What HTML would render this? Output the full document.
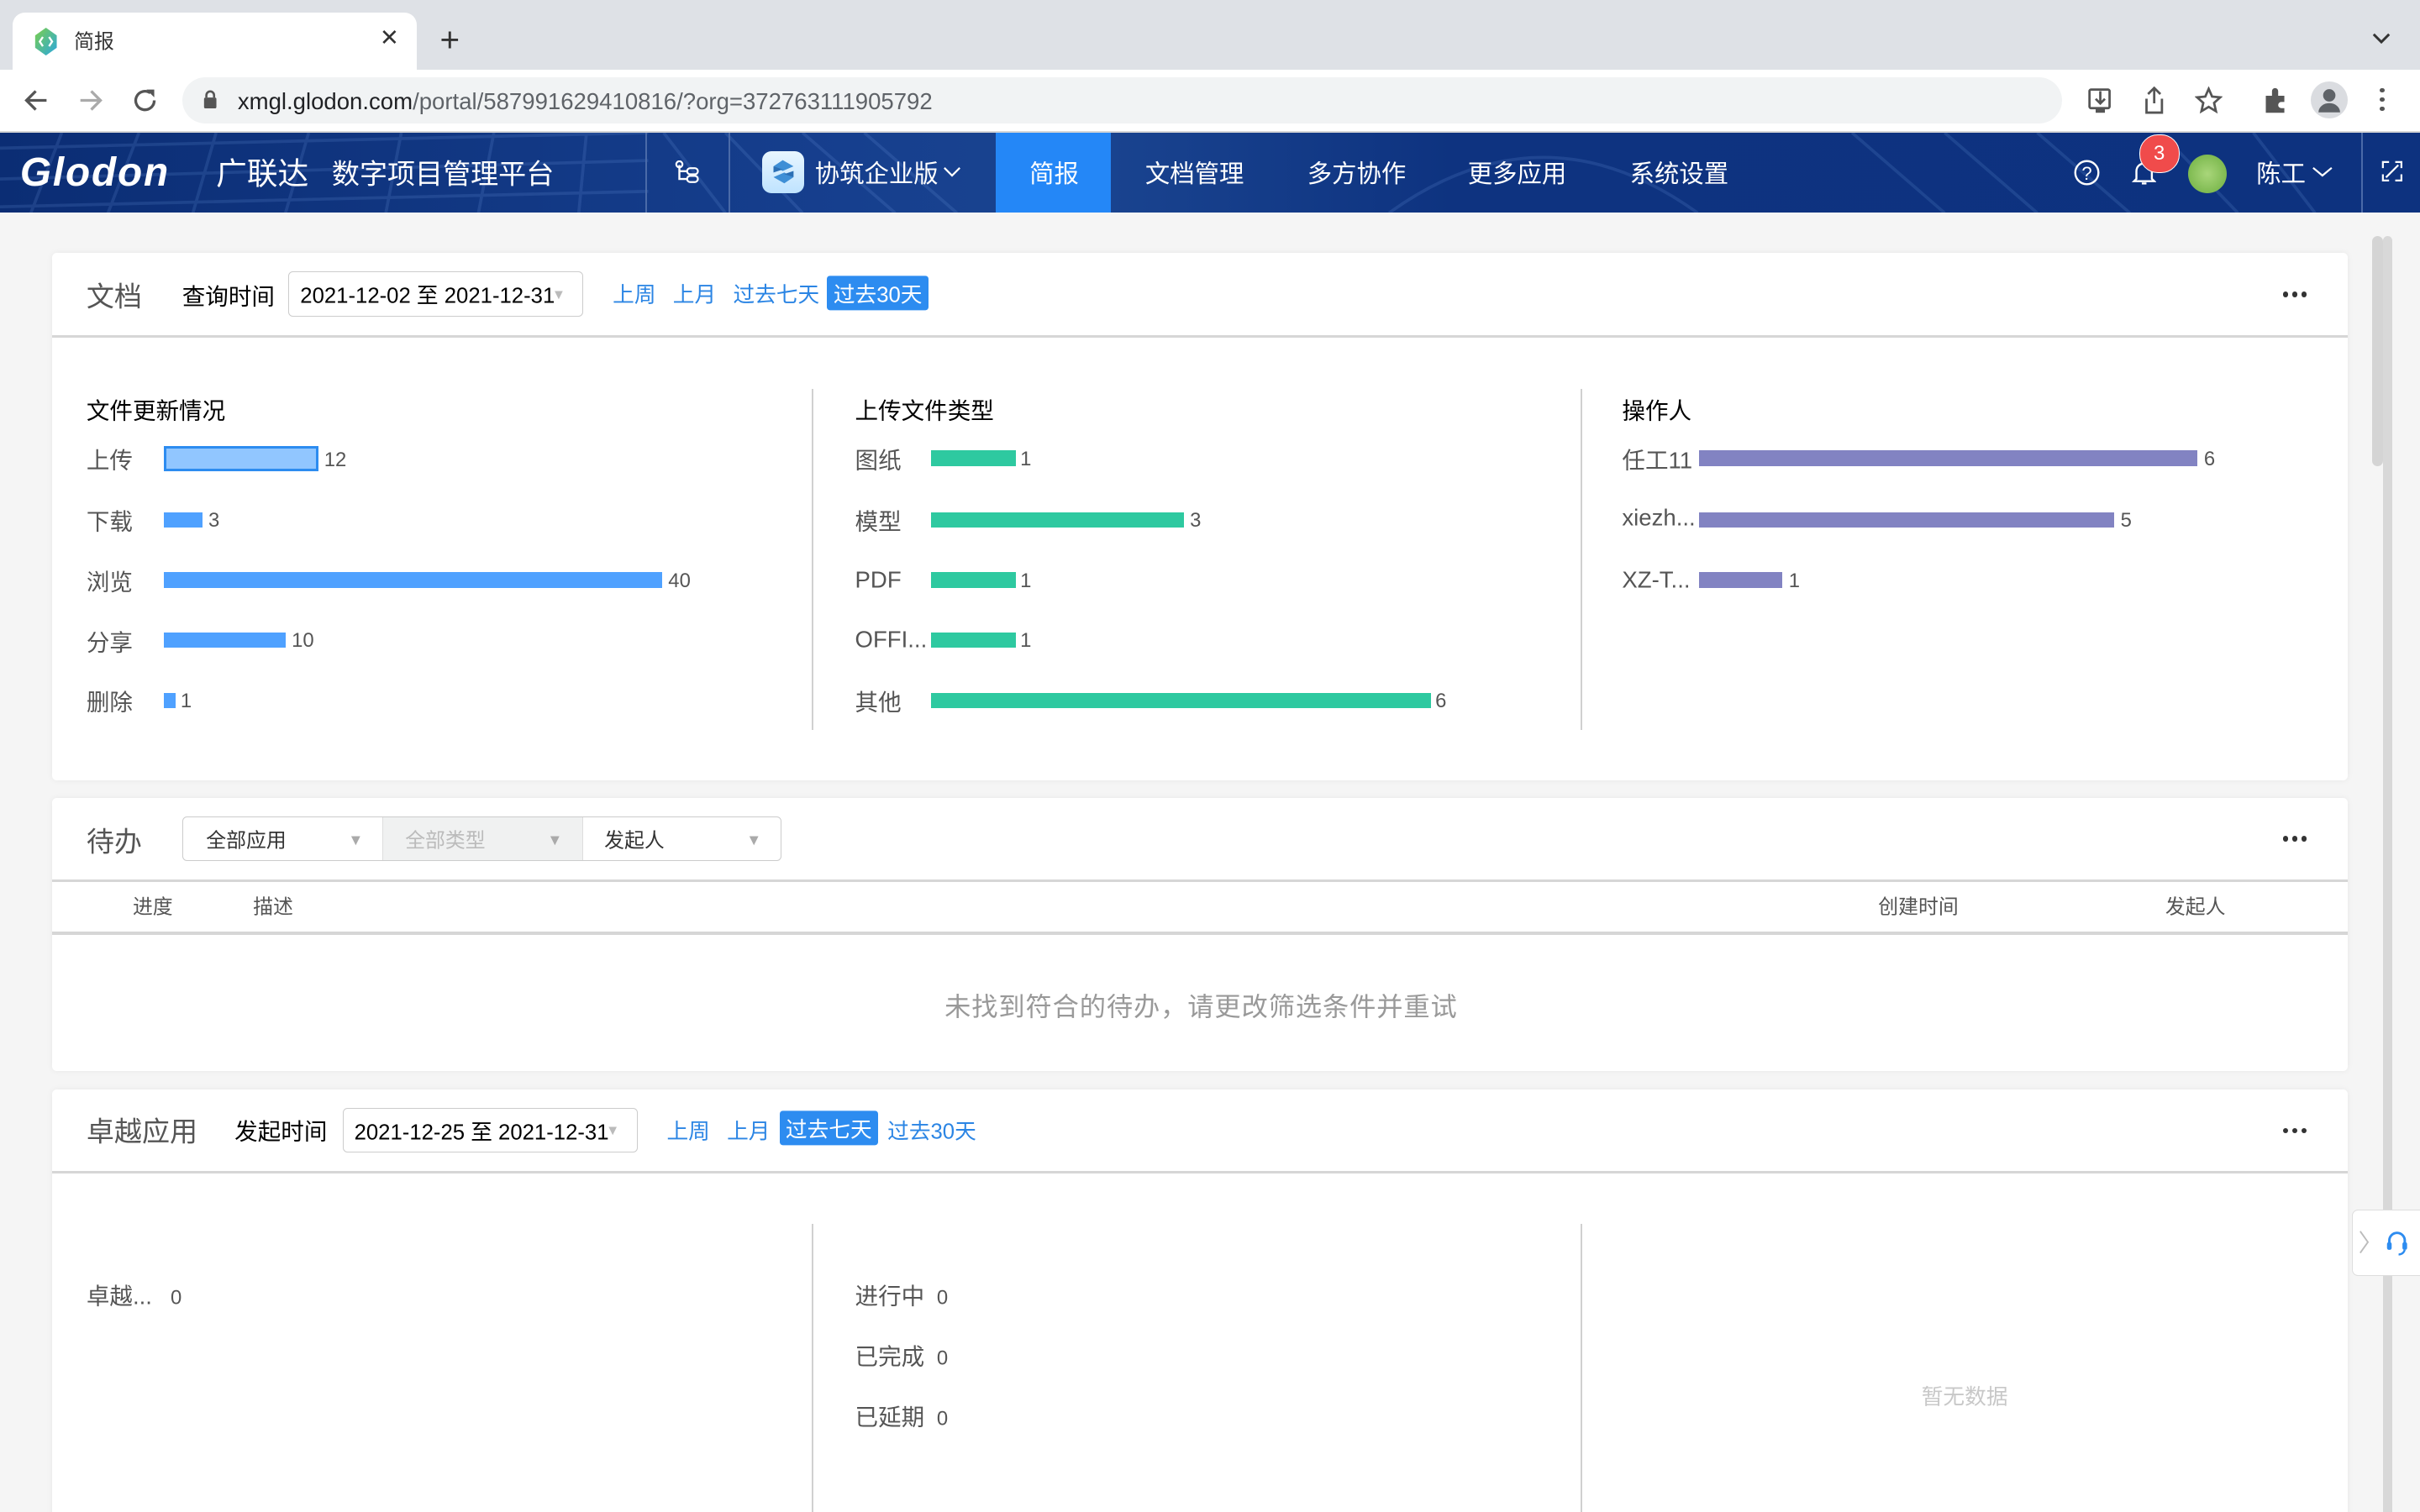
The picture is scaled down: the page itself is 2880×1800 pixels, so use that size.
<!DOCTYPE html>
<html><head><meta charset="utf-8">
<style>
html,body{margin:0;padding:0;overflow:hidden;}
body{width:1568px;height:980px;zoom:1.836735;position:relative;background:#f5f5f5;font-family:"Liberation Sans","Noto Sans CJK SC",sans-serif;color:#333;}
.a{position:absolute;white-space:nowrap;}
.card{position:absolute;left:34px;width:1487px;background:#fff;border-radius:3px;box-shadow:0 0 4px rgba(0,0,0,.06);}
.hd{position:absolute;left:0;right:0;top:0;height:53px;border-bottom:2px solid #d6d6d6;}
.t{font-size:18px;color:#555;transform:translateY(-3px);}
.lk{font-size:14px;color:#2b85e4;transform:translateY(-2px);}
.act{background:#2d8cf0;color:#fff;padding:1px 4px;border-radius:2px;}
.sel{position:absolute;border:1px solid #ccc;border-radius:3px;font-size:14px;color:#000;}
.lab{font-size:15px;color:#555;transform:translateY(-2px);}
.num{font-size:13px;color:#555;}
.bar{position:absolute;height:10px;}
.b{background:#4fa1ff;}.g{background:#2ec9a0;}.p{background:#8283c2;}
.dots{position:absolute;right:22px;top:25px;width:20px;height:4px;}
.dots i{position:absolute;top:0;width:3.5px;height:3.5px;border-radius:50%;background:#333;}
.vl{position:absolute;width:1px;background:#d0d0d0;}
.nav{font-size:16px;color:#fff;top:100px;}
.up{transform:translateY(-2px);}
</style></head><body>
<div class="a" style="left:0;top:0;width:1568px;height:45px;background:#dee1e6;"></div>
<div class="a" style="left:8px;top:8px;width:262px;height:37px;background:#fff;border-radius:8px 8px 0 0;"></div>
<svg class="a" style="left:22px;top:18px" width="16" height="18" viewBox="0 0 16 18"><defs><linearGradient id="tg" x1="0" y1="0" x2="1" y2="1"><stop offset="0" stop-color="#7ccf4a"/><stop offset="1" stop-color="#2aa7e0"/></linearGradient></defs><path d="M8 0 L15 5 L15 13 L8 18 L1 13 L1 5Z" fill="url(#tg)"/><path d="M6 6 L4 9 L6 12 M10 6 L12 9 L10 12" stroke="#fff" stroke-width="1.3" fill="none"/></svg>
<div class="a up" style="left:48px;top:18px;font-size:13px;color:#333;">简报</div>
<div class="a" style="left:246px;top:16px;font-size:15px;color:#333;">✕</div>
<div class="a" style="left:285px;top:13px;font-size:22px;color:#333;">+</div>
<svg class="a" style="left:1537px;top:21px" width="12" height="8"><path d="M1 1 L6 6 L11 1" stroke="#333" stroke-width="1.6" fill="none"/></svg>
<div class="a" style="left:0;top:45px;width:1568px;height:40px;background:#fff;"></div>
<div class="a" style="left:0;top:85px;width:1568px;height:1px;background:#d6d6d6;"></div>
<svg class="a" style="left:14px;top:56px" width="18" height="18"><path d="M16 9 H3 M9 3 L3 9 L9 15" stroke="#555" stroke-width="1.8" fill="none"/></svg>
<svg class="a" style="left:50px;top:56px" width="18" height="18"><path d="M2 9 H15 M9 3 L15 9 L9 15" stroke="#aaa" stroke-width="1.8" fill="none"/></svg>
<svg class="a" style="left:85px;top:56px" width="18" height="18"><path d="M15 9 A6 6 0 1 1 12.5 4.2" stroke="#555" stroke-width="1.8" fill="none"/><path d="M10 2 L15 2 L15 7Z" fill="#555"/></svg>
<div class="a" style="left:118px;top:50px;width:1218px;height:30px;background:#f1f3f4;border-radius:15px;"></div>
<svg class="a" style="left:131px;top:58px" width="10" height="13"><rect x="1" y="5" width="8" height="7" rx="1" fill="#555"/><path d="M2.5 5 V3.5 A2.5 2.5 0 0 1 7.5 3.5 V5" stroke="#555" stroke-width="1.4" fill="none"/></svg>
<div class="a" style="left:154px;top:57px;font-size:15px;color:#202124;">xmgl.glodon.com<span style="color:#5f6368">/portal/587991629410816/?org=372763111905792</span></div>
<svg class="a" style="left:1352px;top:56px" width="18" height="18"><rect x="2" y="2" width="13" height="12" rx="1" stroke="#555" stroke-width="1.5" fill="none"/><path d="M9 3 V11 M6 8 L9 11 L12 8" stroke="#555" stroke-width="1.5" fill="none"/><rect x="6" y="14" width="6" height="3" fill="#555"/></svg>
<svg class="a" style="left:1388px;top:55px" width="16" height="20"><path d="M8 2 V12 M4 6 L8 2 L12 6 M3 9 V18 H13 V9" stroke="#555" stroke-width="1.5" fill="none"/></svg>
<svg class="a" style="left:1422px;top:56px" width="18" height="18"><path d="M9 1.5 L11.2 6.5 L16.5 7 L12.5 10.6 L13.7 16 L9 13.2 L4.3 16 L5.5 10.6 L1.5 7 L6.8 6.5Z" stroke="#555" stroke-width="1.5" fill="none"/></svg>
<svg class="a" style="left:1465px;top:56px" width="18" height="18"><path d="M3 6 H7 V3 A2 2 0 0 1 11 3 V6 H15 V10 H13 A2 2 0 0 0 13 14 H15 V17 H3Z" fill="#555"/></svg>
<div class="a" style="left:1497px;top:53px;width:24px;height:24px;border-radius:50%;background:#dadce0;"></div>
<svg class="a" style="left:1497px;top:53px" width="24" height="24"><circle cx="12" cy="9" r="4" fill="#5f6368"/><path d="M5 20 A7 6 0 0 1 19 20Z" fill="#5f6368"/></svg>
<div class="a" style="left:1542px;top:57px;width:3px;height:3px;border-radius:50%;background:#555;box-shadow:0 6px 0 #555,0 12px 0 #555;"></div>
<div class="a" style="left:0;top:86px;width:1568px;height:52px;background:linear-gradient(90deg,#0b2d74 0%,#163f8e 35%,#1a4490 45%,#0e3380 60%,#0d327f 100%);overflow:hidden;">
<svg width="1568" height="52" style="position:absolute;left:0;top:0;opacity:.18"><g stroke="#6f9ae0" stroke-width="2" fill="none"><path d="M0 10 L420 0 M0 30 L420 18 M0 48 L420 38 M40 0 L20 52 M90 0 L70 52 M140 0 L125 52 M200 0 L185 52 M260 0 L250 52 M320 0 L310 52 M380 0 L375 52 M430 0 L470 52 M470 0 L520 52 M520 0 L580 52 M560 0 L620 52 M900 52 Q1000 -20 1100 52 M1200 0 L1260 52 M1260 0 L1320 52 M1320 0 L1380 52 M1400 0 L1450 52 M1460 0 L1500 52"/></g></svg>
</div>
<div class="a" style="left:13px;top:97px;font-size:26px;font-weight:bold;font-style:italic;color:#fff;letter-spacing:1px;">Glodon</div>
<div class="a" style="left:140px;top:99px;font-size:20px;color:#fff;transform:translateY(-3px);">广联达</div>
<div class="a" style="left:215px;top:101px;font-size:18px;color:#fff;transform:translateY(-3px);">数字项目管理平台</div>
<div class="a" style="left:418px;top:86px;width:1px;height:52px;background:#4a6aa8;"></div>
<div class="a" style="left:472px;top:86px;width:1px;height:52px;background:#4a6aa8;"></div>
<svg class="a" style="left:437px;top:104px" width="18" height="16"><path d="M3 3 V12 H8 M3 7 H8" stroke="#fff" stroke-width="1.3" fill="none"/><circle cx="3" cy="2.5" r="2" stroke="#fff" stroke-width="1.2" fill="none"/><rect x="8" y="5" width="7" height="4" rx="2" stroke="#fff" stroke-width="1.2" fill="none"/><rect x="8" y="10" width="7" height="4" rx="2" stroke="#fff" stroke-width="1.2" fill="none"/></svg>
<div class="a" style="left:494px;top:98px;width:27px;height:27px;border-radius:6px;background:linear-gradient(#e8f6ff,#bfe3ff);"></div>
<svg class="a" style="left:498px;top:102px" width="19" height="19"><path d="M3 6 L9 2 L16 6 L9 9 Z M3 13 L10 10 L16 13 L10 17Z" fill="#3e8fd6"/><path d="M3 6 V10 L9 8 M16 13 V9 L10 11" fill="#2a6fb5"/></svg>
<div class="a nav" style="left:528px;">协筑企业版</div>
<svg class="a" style="left:611px;top:108px" width="12" height="8"><path d="M1 1 L6 6 L11 1" stroke="#fff" stroke-width="1.2" fill="none"/></svg>
<div class="a" style="left:645px;top:86px;width:75px;height:52px;background:#2487f7;"></div>
<div class="a nav" style="left:667px;">简报</div>
<div class="a nav" style="left:742px;">文档管理</div>
<div class="a nav" style="left:847px;">多方协作</div>
<div class="a nav" style="left:951px;">更多应用</div>
<div class="a nav" style="left:1056px;">系统设置</div>
<svg class="a" style="left:1343px;top:103px" width="18" height="18"><circle cx="9" cy="9" r="7.5" stroke="#fff" stroke-width="1.3" fill="none"/><text x="9" y="13.5" font-size="12" fill="#fff" text-anchor="middle" font-family="Liberation Sans">?</text></svg>
<svg class="a" style="left:1381px;top:103px" width="16" height="18"><path d="M3 13 V8 A5 5 0 0 1 13 8 V13 L14.5 14.5 H1.5Z" stroke="#fff" stroke-width="1.3" fill="none"/><path d="M6.5 16 H9.5" stroke="#fff" stroke-width="1.3"/></svg>
<div class="a" style="left:1386px;top:87px;width:25px;height:24px;border-radius:12px;background:#f04b4b;border:1px solid #fff;color:#fff;font-size:13px;text-align:center;line-height:24px;">3</div>
<div class="a" style="left:1418px;top:100px;width:25px;height:25px;border-radius:50%;background:radial-gradient(#a9d67a,#6cae3f);"></div>
<div class="a nav" style="left:1462px;">陈工</div>
<svg class="a" style="left:1498px;top:108px" width="14" height="8"><path d="M1 1 L7 6 L13 1" stroke="#fff" stroke-width="1.2" fill="none"/></svg>
<div class="a" style="left:1530px;top:86px;width:1px;height:52px;background:#4a6aa8;"></div>
<svg class="a" style="left:1543px;top:104px" width="14" height="14"><path d="M1 5 V1 H5 M9 1 H13 V5 M13 9 V13 H9 M5 13 H1 V9 M3 11 L11 3" stroke="#fff" stroke-width="1.2" fill="none"/></svg>
<div class="a" style="left:1537px;top:153px;width:7px;height:149px;border-radius:4px;background:#d4d4d4;"></div>
<div class="a" style="left:1544px;top:153px;width:6px;height:827px;border-radius:3px 3px 0 0;background:#d8d8d8;"></div>

<div class="card" style="top:164px;height:342px;">
 <div class="hd"></div>
 <div class="a t" style="left:22px;top:17px;">文档</div>
 <div class="a up" style="left:84px;top:18px;font-size:15px;color:#000;">查询时间</div>
 <div class="sel" style="left:153px;top:12px;width:190px;height:28px;"><span class="a up" style="left:7px;top:6px;">2021-12-02 至 2021-12-31</span><span class="a" style="left:170px;top:9px;font-size:9px;color:#bbb;">▼</span></div>
 <div class="a lk" style="left:363px;top:18px;">上周</div>
 <div class="a lk" style="left:402px;top:18px;">上月</div>
 <div class="a lk" style="left:441px;top:18px;">过去七天</div>
 <div class="a lk act" style="left:502px;top:17px;">过去30天</div>
 <div class="dots"><i style="left:0"></i><i style="left:6px"></i><i style="left:12px"></i></div>
 <div class="a up" style="left:22px;top:92px;font-size:15px;color:#000;">文件更新情况</div>
 <div class="a up" style="left:520px;top:92px;font-size:15px;color:#000;">上传文件类型</div>
 <div class="a up" style="left:1017px;top:92px;font-size:15px;color:#000;">操作人</div>
 <div class="vl" style="left:492px;top:88px;height:221px;"></div>
 <div class="vl" style="left:990px;top:88px;height:221px;"></div>
</div>
<div class="a lab" style="left:56px;top:288px;">上传</div><div class="a" style="left:106px;top:289px;width:97px;height:13px;background:#91c6ff;border:2px solid #2d8cf0;"></div><div class="a num" style="left:210px;top:291px;">12</div>
<div class="a lab" style="left:56px;top:328px;">下载</div><div class="bar b" style="left:106px;top:332px;width:25px;"></div><div class="a num" style="left:135px;top:330px;">3</div>
<div class="a lab" style="left:56px;top:367px;">浏览</div><div class="bar b" style="left:106px;top:371px;width:323px;"></div><div class="a num" style="left:433px;top:369px;">40</div>
<div class="a lab" style="left:56px;top:406px;">分享</div><div class="bar b" style="left:106px;top:410px;width:79px;"></div><div class="a num" style="left:189px;top:408px;">10</div>
<div class="a lab" style="left:56px;top:445px;">删除</div><div class="bar b" style="left:106px;top:449px;width:8px;"></div><div class="a num" style="left:117px;top:447px;">1</div>

<div class="a lab" style="left:554px;top:288px;">图纸</div><div class="bar g" style="left:603px;top:292px;width:55px;"></div><div class="a num" style="left:661px;top:290px;">1</div>
<div class="a lab" style="left:554px;top:328px;">模型</div><div class="bar g" style="left:603px;top:332px;width:164px;"></div><div class="a num" style="left:771px;top:330px;">3</div>
<div class="a lab" style="left:554px;top:369px;">PDF</div><div class="bar g" style="left:603px;top:371px;width:55px;"></div><div class="a num" style="left:661px;top:369px;">1</div>
<div class="a lab" style="left:554px;top:408px;">OFFI...</div><div class="bar g" style="left:603px;top:410px;width:55px;"></div><div class="a num" style="left:661px;top:408px;">1</div>
<div class="a lab" style="left:554px;top:445px;">其他</div><div class="bar g" style="left:603px;top:449px;width:324px;"></div><div class="a num" style="left:930px;top:447px;">6</div>

<div class="a lab" style="left:1051px;top:288px;">任工11</div><div class="bar p" style="left:1101px;top:292px;width:323px;"></div><div class="a num" style="left:1428px;top:290px;">6</div>
<div class="a lab" style="left:1051px;top:329px;">xiezh...</div><div class="bar p" style="left:1101px;top:332px;width:269px;"></div><div class="a num" style="left:1374px;top:330px;">5</div>
<div class="a lab" style="left:1051px;top:369px;">XZ-T...</div><div class="bar p" style="left:1101px;top:371px;width:54px;"></div><div class="a num" style="left:1159px;top:369px;">1</div>

<div class="card" style="top:517px;height:177px;">
 <div class="hd"></div>
 <div class="a t" style="left:22px;top:17px;">待办</div>
 <div class="sel" style="left:84px;top:12px;width:387px;height:28px;overflow:hidden;">
  <div class="a" style="left:129px;top:0;width:129px;height:28px;background:#f0f1f1;border-left:1px solid #ddd;border-right:1px solid #ddd;"></div>
  <span class="a up" style="left:15px;top:6px;font-size:13px;color:#333;">全部应用</span><span class="a" style="left:107px;top:9px;font-size:10px;color:#aaa;">▼</span>
  <span class="a up" style="left:144px;top:6px;font-size:13px;color:#bbb;">全部类型</span><span class="a" style="left:236px;top:9px;font-size:10px;color:#aaa;">▼</span>
  <span class="a up" style="left:273px;top:6px;font-size:13px;color:#333;">发起人</span><span class="a" style="left:365px;top:9px;font-size:10px;color:#aaa;">▼</span>
 </div>
 <div class="dots"><i style="left:0"></i><i style="left:6px"></i><i style="left:12px"></i></div>
 <div class="a" style="left:0;right:0;top:87px;height:2px;background:#d6d6d6;"></div>
 <div class="a up" style="left:52px;top:62px;font-size:13px;color:#555;">进度</div>
 <div class="a up" style="left:130px;top:62px;font-size:13px;color:#555;">描述</div>
 <div class="a up" style="left:1183px;top:62px;font-size:13px;color:#555;">创建时间</div>
 <div class="a up" style="left:1369px;top:62px;font-size:13px;color:#555;">发起人</div>
 <div class="a up" style="left:578px;top:124px;font-size:17px;color:#999;letter-spacing:0.5px;">未找到符合的待办，请更改筛选条件并重试</div>
</div>

<div class="card" style="top:706px;height:290px;">
 <div class="hd"></div>
 <div class="a t" style="left:22px;top:16px;">卓越应用</div>
 <div class="a up" style="left:118px;top:17px;font-size:15px;color:#000;">发起时间</div>
 <div class="sel" style="left:188px;top:12px;width:190px;height:28px;"><span class="a up" style="left:7px;top:6px;">2021-12-25 至 2021-12-31</span><span class="a" style="left:170px;top:9px;font-size:9px;color:#bbb;">▼</span></div>
 <div class="a lk" style="left:398px;top:18px;">上周</div>
 <div class="a lk" style="left:437px;top:18px;">上月</div>
 <div class="a lk act" style="left:471px;top:16px;">过去七天</div>
 <div class="a lk" style="left:541px;top:18px;">过去30天</div>
 <div class="dots"><i style="left:0"></i><i style="left:6px"></i><i style="left:12px"></i></div>
 <div class="vl" style="left:492px;top:87px;height:200px;"></div>
 <div class="vl" style="left:990px;top:87px;height:200px;"></div>
 <div class="a lab" style="left:22px;top:124px;">卓越...<span class="num" style="margin-left:12px;">0</span></div>
 <div class="a lab" style="left:520px;top:124px;">进行中<span class="num" style="margin-left:8px;">0</span></div>
 <div class="a lab" style="left:520px;top:163px;">已完成<span class="num" style="margin-left:8px;">0</span></div>
 <div class="a lab" style="left:520px;top:202px;">已延期<span class="num" style="margin-left:8px;">0</span></div>
 <div class="a up" style="left:1211px;top:190px;font-size:14px;color:#c8c8c8;">暂无数据</div>
</div>

<div class="a" style="left:1524px;top:784px;width:50px;height:42px;background:#fff;border:1px solid #ddd;border-radius:4px;"></div>
<svg class="a" style="left:1528px;top:797px" width="8" height="16"><path d="M1 1 L6 8 L1 15" stroke="#bbb" stroke-width="1" fill="none"/></svg>
<svg class="a" style="left:1545px;top:797px" width="16" height="18"><path d="M3 10 V7 A5 5 0 0 1 13 7 V10" stroke="#2d8cf0" stroke-width="1.6" fill="none"/><rect x="1.5" y="8" width="3" height="5" rx="1.2" fill="#2d8cf0"/><rect x="11.5" y="8" width="3" height="5" rx="1.2" fill="#2d8cf0"/><path d="M13 13 Q12 16 9 16" stroke="#2d8cf0" stroke-width="1.3" fill="none"/></svg>
</body></html>
